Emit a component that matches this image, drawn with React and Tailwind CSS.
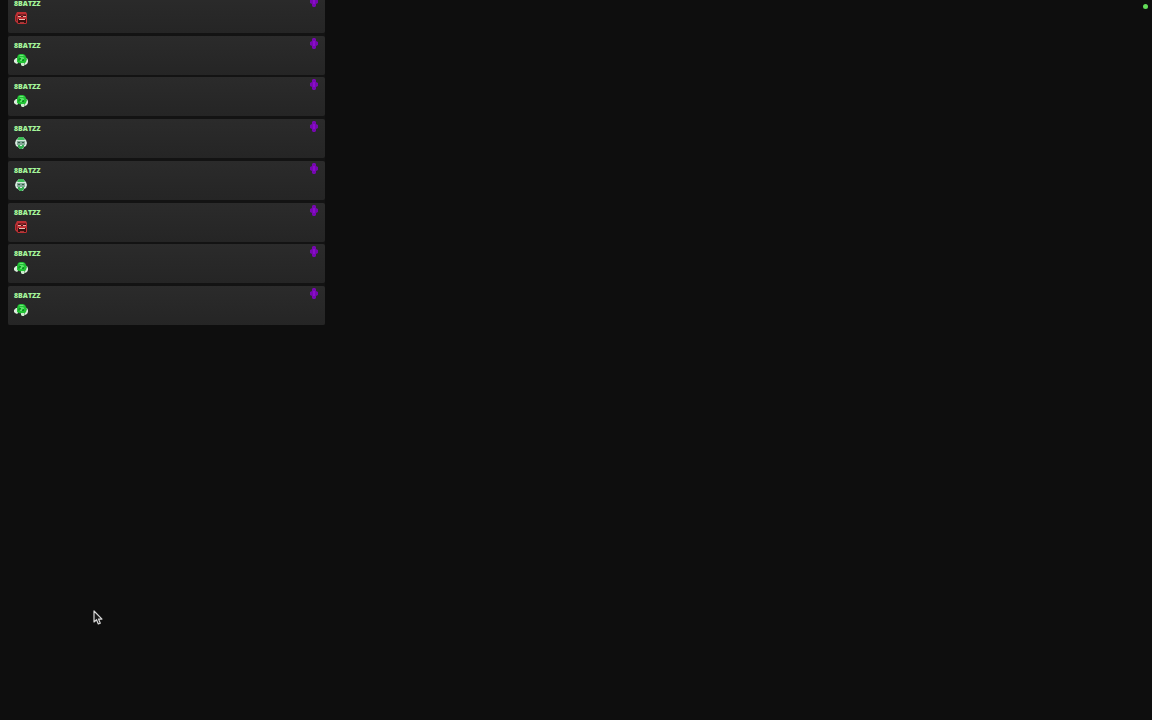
import React from 'react';

const messages = [
  { id: 1, user: '8BATZZ', emote: 'angry' },
  { id: 2, user: '8BATZZ', emote: 'wink' },
  { id: 3, user: '8BATZZ', emote: 'wink' },
  { id: 4, user: '8BATZZ', emote: 'calm' },
  { id: 5, user: '8BATZZ', emote: 'calm' },
  { id: 6, user: '8BATZZ', emote: 'angry' },
  { id: 7, user: '8BATZZ', emote: 'wink' },
  { id: 8, user: '8BATZZ', emote: 'wink' },
];

function AngryEmote() {
  return (
    <svg viewBox="0 0 14 14" className="h-3.5 w-3.5" role="img" aria-label="angry">
      <path d="M3 1h9l1 2v9l-1 1H4l-2-2-1-1V5l1-2z" fill="#bd3034" />
      <path d="M4 3h8v1H4z" fill="#7c1f22" />
      <path d="M4 4h2l2 1 2-1h2v2H4z" fill="#451719" />
      <path d="M4 5h3v1H4zM9 5h3v1H9z" fill="#eda59e" />
      <path d="M4 8h8v4H4z" fill="#32110f" />
      <path d="M5 8h6v1H5z" fill="#e8bcb2" />
      <path d="M6 11h4v1H6z" fill="#9c3a38" />
      <path d="M2 5h1v5H2z" fill="#7c2226" />
    </svg>
  );
}

function WinkEmote() {
  return (
    <svg viewBox="0 0 14 14" className="h-3.5 w-3.5" role="img" aria-label="wink">
      <path d="M0 7l2-2h2v5l-1 1-2-1-1-1z" fill="#dcebdc" />
      <path d="M11 5h2l1 2v2l-1 2-2 1z" fill="#dcebdc" />
      <path d="M6 1h3l2 1 1 2 1 2-1 3-2 2H8L5 10 3 9V5l1-3z" fill="#22c435" />
      <path d="M6 2h3l1 1H5z" fill="#71e47c" />
      <path d="M4 7l1-2h2v1H6l-1 2zM9 6h1v2H8V7h1z" fill="#138a25" />
      <path d="M6 4h3l1 1v1H8v2H6V7h1V5H6z" fill="#58e566" />
      <path d="M7 10h3l1 1-1 2H8l-1-1z" fill="#c9ebcb" />
    </svg>
  );
}

function CalmEmote() {
  return (
    <svg viewBox="0 0 14 14" className="h-3.5 w-3.5" role="img" aria-label="calm">
      <path d="M5 1h4l3 3 1 3-1 3-2 1-1 2H6l-2-2-2-1-1-3 1-3z" fill="#d7e9df" />
      <path d="M5 1h4l2 3H3z" fill="#3dbd58" />
      <path d="M3 5h8v4H3z" fill="#82a896" />
      <path d="M4 6h2v1H4zM8 6h2v1H8z" fill="#37594a" />
      <path d="M4 9h6v2l-2 2H6l-2-2z" fill="#35ae50" />
      <path d="M6 9h2v1H6z" fill="#d7e9df" />
    </svg>
  );
}

const emotes = { angry: AngryEmote, wink: WinkEmote, calm: CalmEmote };

function Badge() {
  return (
    <svg viewBox="0 0 10 12" className="h-3 w-2.5" aria-hidden="true">
      <path d="M4 0h2l1 1v2l2 1v3L7 8v2l-1 1H4l-1-1V8L1 7V4l2-1V1z" fill="#7608b0" />
      <path d="M4 3h2v5H4z" fill="#8b0ccb" />
    </svg>
  );
}

function Message({ user, emote }) {
  const Emote = emotes[emote];

  return (
    <li className="flex h-[39px] items-start justify-between rounded-xs bg-linear-to-b from-[#2b2b2b] to-[#252525] pr-1.5 pl-1.5">
      <div className="pt-1">
        <p className="text-[7px] leading-3 font-extrabold text-[#a5f59a]">{user}</p>
        <div className="pt-px">
          <Emote />
        </div>
      </div>
      <div className="pt-0.5">
        <Badge />
      </div>
    </li>
  );
}

export default function App() {
  return (
    <main className="relative min-h-screen bg-[#0e0e0e] px-2 font-['Open_Sans','Noto_Sans',sans-serif]">
      <section className="flex h-[325px] w-full max-w-[317px] flex-col justify-end overflow-hidden bg-[#131313]">
        <ul className="flex h-[331px] shrink-0 flex-col justify-between">
          {messages.map((message) => (
            <Message key={message.id} user={message.user} emote={message.emote} />
          ))}
        </ul>
      </section>

      <span className="absolute top-1 right-1 h-[5px] w-[5px] rounded-full bg-[#62dc58]" />

      <svg viewBox="0 0 10 16" className="absolute top-[610px] left-[93px] h-4 w-2.5" aria-hidden="true">
        <path
          d="M1 1v11l2.500-2.300L5.300 14l2-.8-1.800-4.100H9z"
          fill="#181818"
          stroke="#d8d8d8"
          strokeWidth="1.200"
          strokeLinejoin="round"
        />
      </svg>
    </main>
  );
}
